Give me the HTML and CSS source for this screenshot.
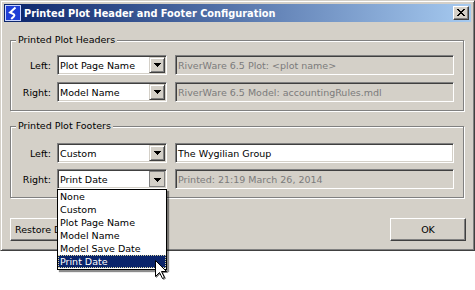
FILE: index.html
```html
<!DOCTYPE html>
<html>
<head>
<meta charset="utf-8">
<link rel="stylesheet" href="styles.css">
</head>
<body>
<div class="window">
  <div class="titlebar">
    <svg class="app-icon" width="16" height="16" viewBox="0 0 16 16">
      <rect x="0.5" y="0.5" width="15" height="15" fill="#1f3fd6" stroke="#c8d4ff"/>
      <path d="M10.5 2.5 L5 7.5 L8.5 9.2 Q10.2 10.3 8.6 11.8 L6.2 14" fill="none" stroke="#fff" stroke-width="2"/>
    </svg>
    <span class="title">Printed Plot Header and Footer Configuration</span>
    <div class="close-btn">
      <svg width="8" height="7" viewBox="0 0 8 7" shape-rendering="crispEdges">
        <path d="M0 0h2v1h1v1h2v-1h1v-1h2v1h-1v1h-1v1h-1v1h1v1h1v1h1v1h-2v-1h-1v-1h-2v1h-1v1h-2v-1h1v-1h1v-1h1v-1h-1v-1h-1v-1h-1z" fill="#000"/>
      </svg>
    </div>
  </div>
  <div class="content">
    <div class="group g1">
      <div class="legend">Printed Plot Headers</div>
      <div class="rows">
        <div class="row">
          <label>Left:</label>
          <div class="combo"><span class="combo-text">Plot Page Name</span><span class="arrow-btn"><svg width="7" height="4" viewBox="0 0 7 4" shape-rendering="crispEdges"><path d="M0 0h7v1h-1v1h-1v1h-1v1h-1v-1h-1v-1h-1v-1h-1z"/></svg></span></div>
          <div class="field disabled">RiverWare 6.5 Plot: &lt;plot name&gt;</div>
        </div>
        <div class="row">
          <label>Right:</label>
          <div class="combo"><span class="combo-text">Model Name</span><span class="arrow-btn"><svg width="7" height="4" viewBox="0 0 7 4" shape-rendering="crispEdges"><path d="M0 0h7v1h-1v1h-1v1h-1v1h-1v-1h-1v-1h-1v-1h-1z"/></svg></span></div>
          <div class="field disabled">RiverWare 6.5 Model: accountingRules.mdl</div>
        </div>
      </div>
    </div>
    <div class="group g2">
      <div class="legend">Printed Plot Footers</div>
      <div class="rows">
        <div class="row">
          <label>Left:</label>
          <div class="combo"><span class="combo-text">Custom</span><span class="arrow-btn"><svg width="7" height="4" viewBox="0 0 7 4" shape-rendering="crispEdges"><path d="M0 0h7v1h-1v1h-1v1h-1v1h-1v-1h-1v-1h-1v-1h-1z"/></svg></span></div>
          <div class="field">The Wygilian Group</div>
        </div>
        <div class="row">
          <label>Right:</label>
          <div class="combo"><span class="combo-text">Print Date</span><span class="arrow-btn pressed"><svg width="7" height="4" viewBox="0 0 7 4" shape-rendering="crispEdges"><path d="M0 0h7v1h-1v1h-1v1h-1v1h-1v-1h-1v-1h-1v-1h-1z"/></svg></span></div>
          <div class="field disabled">Printed: 21:19 March 26, 2014</div>
        </div>
      </div>
    </div>
    <div class="buttons">
      <button class="btn restore">Restore Defaults</button>
      <button class="btn ok">OK</button>
    </div>
  </div>
  <ul class="dropdown">
    <li>None</li>
    <li>Custom</li>
    <li>Plot Page Name</li>
    <li>Model Name</li>
    <li>Model Save Date</li>
    <li class="selected">Print Date</li>
  </ul>
  <svg class="cursor" width="14" height="21" viewBox="0 0 14 21">
    <path d="M0.5 0.5 L0.5 16.5 L4.5 12.5 L7.5 18.5 L9.5 17.5 L6.5 11.5 L11.5 11.5 Z" fill="#fff" stroke="#000" stroke-linejoin="miter"/>
  </svg>
</div>
</body>
</html>
```
FILE: styles.css
```css
html, body {
  margin: 0;
  background: #fff;
}
body {
  height: 290px;
  font-family: "DejaVu Sans", Verdana, sans-serif;
  font-size: 9.5px;
  color: #000;
}
.window {
  position: relative;
  width: 475px;
  height: 251px;
  box-sizing: border-box;
  background: #d4d0c8;
  border: 1px solid;
  border-color: #d4d0c8 #404040 #404040 #d4d0c8;
  box-shadow: inset 1px 1px #fff, inset -1px -1px #808080;
  padding: 3px;
  display: flex;
  flex-direction: column;
}
.titlebar {
  height: 18px;
  flex: none;
  display: flex;
  align-items: center;
  background: linear-gradient(to right, #0a246a, #a6caf0);
  color: #fff;
  font-weight: bold;
  font-size: 9.8px;
  padding: 0 2px 0 1px;
}
.app-icon {
  display: block;
  flex: none;
}
.title {
  margin-left: 3px;
  white-space: nowrap;
}
.close-btn {
  margin-left: auto;
  width: 16px;
  height: 14px;
  box-sizing: border-box;
  background: #d4d0c8;
  border: 1px solid;
  border-color: #fff #404040 #404040 #fff;
  box-shadow: inset -1px -1px #808080;
  display: flex;
  align-items: center;
  justify-content: center;
  padding: 0 1px 1px 0;
}
.close-btn svg {
  display: block;
}
.content {
  flex: 1;
  display: flex;
  flex-direction: column;
  padding: 18px 7px 6px 6px;
}
.group {
  display: flex;
  flex-direction: column;
  border: 1px solid #808080;
  box-shadow: 1px 1px 0 #fff, inset 1px 1px 0 #fff;
  padding: 0 8px 8px 0;
}
.g2 {
  margin-top: 15px;
}
.legend {
  align-self: flex-start;
  margin: -8px 0 0 5px;
  padding: 0 2px;
  line-height: 13px;
  background: #d4d0c8;
}
.rows {
  display: flex;
  flex-direction: column;
}
.g1 .rows {
  margin-top: 9px;
  gap: 7px;
}
.g2 .rows {
  margin-top: 11px;
  gap: 6px;
}
.row {
  display: flex;
  align-items: center;
  height: 20px;
}
.row label {
  width: 40px;
  text-align: right;
  margin-right: 6px;
}
.combo, .field {
  box-sizing: border-box;
  height: 20px;
  border: 1px solid;
  border-color: #808080 #fff #fff #808080;
  box-shadow: inset 1px 1px #404040, inset -1px -1px #d4d0c8;
  display: flex;
  align-items: center;
  white-space: nowrap;
  overflow: hidden;
}
.combo {
  width: 110px;
  margin-right: 8px;
  background: #fff;
  padding: 1px;
}
.combo-text {
  flex: 1;
  padding-left: 1px;
}
.arrow-btn {
  flex: none;
  width: 16px;
  height: 16px;
  box-sizing: border-box;
  background: #d4d0c8;
  border: 1px solid;
  border-color: #d4d0c8 #404040 #404040 #d4d0c8;
  box-shadow: inset 1px 1px #fff, inset -1px -1px #808080;
  display: flex;
  align-items: center;
  justify-content: center;
}
.arrow-btn svg {
  display: block;
  fill: #000;
}
.arrow-btn.pressed {
  border-color: #808080;
  box-shadow: none;
  padding: 1px 0 0 1px;
}
.field {
  width: 279px;
  background: #fff;
  padding-left: 2px;
}
.field.disabled {
  background: #d4d0c8;
  color: #7b7b7b;
}
.buttons {
  margin-top: 20px;
  margin-right: -2px;
  display: flex;
  justify-content: space-between;
}
.btn {
  height: 23px;
  box-sizing: border-box;
  font: inherit;
  color: #000;
  background: #d4d0c8;
  border: 1px solid;
  border-color: #fff #404040 #404040 #fff;
  box-shadow: inset -1px -1px #808080;
  padding: 0;
  margin: 0;
}
.restore {
  width: 100px;
  text-align: left;
  padding-left: 4px;
}
.ok {
  width: 76px;
}
.dropdown {
  position: absolute;
  z-index: 2;
  left: 56px;
  top: 188px;
  width: 110px;
  box-sizing: border-box;
  margin: 0;
  padding: 0 0 1px;
  list-style: none;
  background: #fff;
  border: 1px solid #000;
  box-shadow: 2px 2px 1px rgba(0, 0, 0, 0.45);
}
.dropdown li {
  height: 13px;
  line-height: 13px;
  padding-left: 2px;
  white-space: nowrap;
}
.dropdown li.selected {
  background: #0a246a;
  color: #fff;
  outline: 1px dotted #d8d4a0;
  outline-offset: -1px;
}
.cursor {
  position: absolute;
  z-index: 3;
  left: 154px;
  top: 259px;
  filter: drop-shadow(1px 1px 0.5px rgba(0, 0, 0, 0.45));
}
```
